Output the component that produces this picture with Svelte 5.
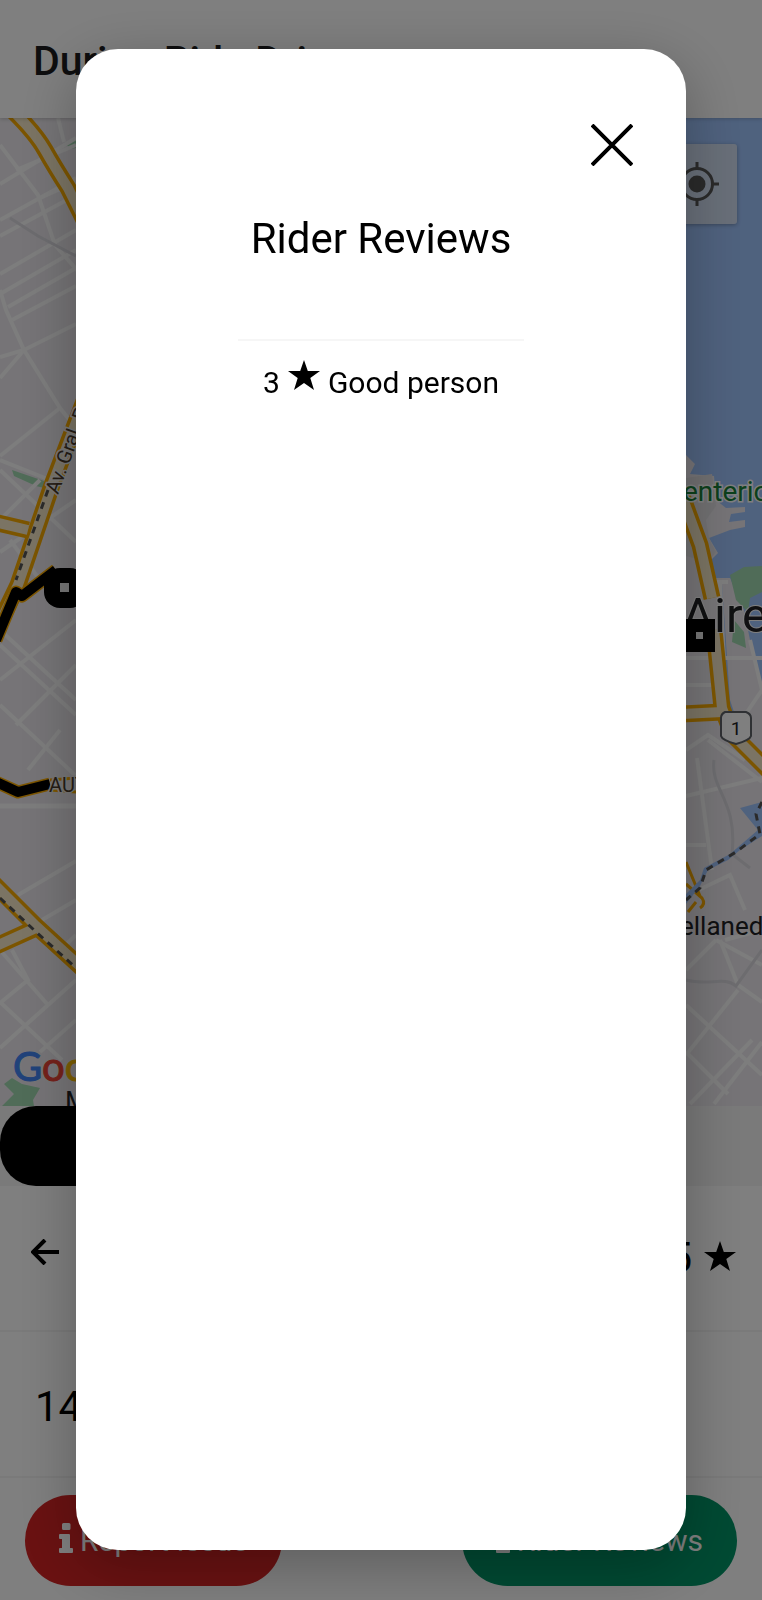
<script>
  let open = $state(true);
  const reviews = [{ stars: 3, comment: 'Good person' }];

  const minorRoads = [
    'M0 145 L38 195 L55 245 L90 285', 'M58 118 L64 142', 'M0 184 L76 138', 'M16 170 L76 145', 'M0 220 L76 178',
    'M0 236 L76 195', 'M40 198 L76 182', 'M0 274 L76 230', 'M0 294 L76 250', 'M8 307 L76 268',
    'M12 320 L76 286', 'M0 290 L6 310 L24 350 L60 408 L76 428', 'M0 357 L24 350 L76 324', 'M24 350 L0 378',
    'M60 408 L0 456', 'M0 460 L50 480 M0 520 L40 480', 'M0 470 L76 542', 'M0 552 L76 500',
    'M10 540 L40 580', 'M0 630 L76 700', 'M0 645 L76 715', 'M0 680 L76 620',
    'M0 705 L76 776', 'M16 725 L76 665', 'M28 770 L60 730',
    'M18 895 L76 861', 'M42 920 L76 900', 'M0 950 L48 1005', 'M12 950 L28 980 L0 1003', 'M0 1002 L62 1060',
    'M76 980 L0 1048', 'M40 1052 L76 1020', 'M56 954 L76 935',
    'M686 658 H712', 'M686 685 H712', 'M686 750 L708 735 L745 760', 'M697 758 L712 870', 'M686 796 L762 778',
    'M708 740 L762 782', 'M686 845 H706', 'M686 896 L730 875 L745 910',
    'M720 940 L738 985 L762 1002', 'M686 970 L716 940', 'M716 940 L762 965', 'M686 1005 L762 1075',
    'M738 990 L686 1055', 'M686 1052 L728 1094', 'M690 1104 L752 1040', 'M762 1042 L714 1104',
    'M725 940 L762 930', 'M750 640 L762 690', 'M712 658 H762', 'M720 582 L724 660',
    'M762 690 L728 740', 'M728 582 H714'
  ];
  const highways = [
    'M14 112 Q36 134 45 150 T68 188 L84 220',
    'M-6 947 L36 928', 'M-6 884 L36 926 L84 970',
    'M86 396 L52 485 L18 585 L-6 635', 'M-6 522 L28 530',
    'M682 496 L700 545 L712 598', 'M714 630 L722 708 L732 734 L768 770', 'M682 714 L722 712'
  ];
</script>

{#snippet star()}
  <svg class="star" viewBox="0 0 32 30" aria-hidden="true"><path d="M16 0 19.8 11H32l-9.7 7L26 30l-10-7-10 7 3.7-12L0 11h12.2z" /></svg>
{/snippet}

{#snippet info()}
  <svg class="info" viewBox="0 0 14 30" aria-hidden="true"><path d="M4.500 0H10a1.500 1.500 0 0 1 1.500 1.500v4A1.500 1.500 0 0 1 10 7H4.500A1.500 1.500 0 0 1 3 5.500v-4A1.500 1.500 0 0 1 4.500 0zM1 11h9a1 1 0 0 1 1 1v13h2a1 1 0 0 1 1 1v3a1 1 0 0 1-1 1H1a1 1 0 0 1-1-1v-3a1 1 0 0 1 1-1h2v-9H1a1 1 0 0 1-1-1v-3a1 1 0 0 1 1-1z" /></svg>
{/snippet}

<div class="page">
  <header><h1>During Ride Driver</h1></header>

  <section class="map" aria-label="Map">
    <svg class="tiles" viewBox="0 118 762 988" preserveAspectRatio="xMidYMid slice">
      <rect y="118" width="762" height="988" fill="#ece9ee" />
      <path class="water" d="M600 118H762V690L754 660 744 610 730 578H714L709 562 718 553 709 538 730 530 745 527V520L729 522 731 514 745 512V507L726 508 716 500 714 476 690 474 695 464 686 455 600 440z" />
      <path d="M686 478 712 474 716 506 706 520 709 538 716 552 708 562 686 556z" fill="#e2e0e3" />
      <path d="M716 578 730 578 748 640 762 694V800H734L728 660z" fill="#ece9ee" />
      <path class="water" d="M722 584 730 700 734 712 724 712 720 640z" />
      <path class="park" d="M730 575 744 567 762 566V592L750 598 748 612 736 600zM734 620 744 632 746 648 732 642zM66 144 76 138V148L70 149zM12 470 44 481V488L36 486 14 476zM12 1078 22 1084 40 1088 33 1100 34 1106H2L14 1094 4 1084z" />
      {#each minorRoads as d}<path class="minor" {d} />{/each}
      <path d="M10 218 38 236 76 256M714 760C710 790 738 800 732 854L750 868M686 980C710 986 724 976 736 986L762 950" fill="none" stroke="#dad9df" stroke-width="3" />
      <path d="M0 806H76" stroke="#fafafa" stroke-width="5" />
      {#each highways as d}<path class="casing" {d} />{/each}
      {#each highways as d}<path class="lane" {d} />{/each}
      <path class="rail" d="M48 490 16 580M0 898 34 930 76 968" />
      <path class="ramp" d="M686 862 700 896M686 884 702 898Q706 904 700 908M688 912 696 902" />
      <path class="water" d="M740 808 762 802V836L740 850 728 860 708 870 700 886 686 904 686 894 700 880 704 868 730 854 758 830z" />
      <path class="rail" d="M762 802 756 814 760 834 736 852 706 870 700 888 686 900" />
      <path d="M-4 640 16 592 22 596 56 570M-4 782 18 792 50 784" fill="none" stroke="#f9ab00" stroke-width="13" stroke-linejoin="round" />
      <path d="M-4 640 16 592 22 596 56 570M-4 782 18 792 50 784" fill="none" stroke="#000" stroke-width="10" stroke-linejoin="round" />
      <path d="M50 780 76 778M50 790 76 792" stroke="#f9ab00" stroke-width="3" />
      <rect x="44" y="568" width="42" height="40" rx="16" />
      <rect x="60" y="583" width="9" height="9" fill="#eee" />

      <text class="road-name" transform="translate(58 495) rotate(-70)">Av. Gral. Paz</text>
      <text class="road-name" x="49" y="792">AUTOP.</text>
      <text x="683" y="501" font-size="28" fill="#188038" stroke="#fff" stroke-width="3" paint-order="stroke">enterio</text>
      <text x="682" y="632" font-size="49" fill="#202124" stroke="#fff" stroke-width="2" paint-order="stroke">Aires</text>
      <rect x="682" y="619" width="33" height="33" />
      <rect x="696" y="632" width="7" height="7" fill="#eee" />
      <path d="M725 712H746Q751 714 751 718V736Q750 740 736 744 722 740 721 736V718Q721 714 725 712z" fill="#fff" stroke="#5f6368" stroke-width="2" />
      <text x="736" y="735" font-size="19" text-anchor="middle" fill="#202124">1</text>
      <text x="680" y="935" font-size="26" fill="#202124">ellaneda</text>
      <text x="65" y="1111" font-size="27" fill="#202124">M</text>
      <text class="logo" x="13" y="1081"><tspan fill="#4285f4" stroke="#4285f4">G</tspan><tspan fill="#ea4335" stroke="#ea4335">o</tspan><tspan fill="#fbbc05" stroke="#fbbc05">o</tspan><tspan fill="#4285f4">g</tspan><tspan fill="#34a853">l</tspan><tspan fill="#ea4335">e</tspan></text>
    </svg>
    <button class="locate" aria-label="My location">
      <svg viewBox="0 0 44 44"><g fill="none" stroke="#555" stroke-width="3"><circle cx="22" cy="22" r="15.500" /><path d="M22 0v7M22 37v7M0 22h7M37 22h7" /></g><circle cx="22" cy="22" r="8.500" fill="#555" /></svg>
    </button>
  </section>

  <div class="status"><button class="ride" aria-label="Ride status"></button></div>

  <div class="row rider">
    <button class="back" aria-label="Back"><svg viewBox="0 0 28 26"><path d="M28 13H3M14 1 2 13l12 12" fill="none" stroke="#000" stroke-width="4" /></svg></button>
    <span class="rating">5 {@render star()}</span>
  </div>
  <div class="row fare">14</div>

  <footer>
    <button class="action danger">{@render info()} Report Issue</button>
    <button class="action success" onclick={() => (open = true)}>{@render info()} Rider Reviews</button>
  </footer>
</div>

{#if open}
  <div class="backdrop">
    <div class="modal" role="dialog" aria-modal="true" aria-labelledby="reviews-title">
      <button class="close" aria-label="Close" onclick={() => (open = false)}>
        <svg viewBox="0 0 42 42"><path d="M1 1 41 41M41 1 1 41" stroke="#000" stroke-width="4" /></svg>
      </button>
      <h2 id="reviews-title">Rider Reviews</h2>
      <ul>
        {#each reviews as review}
          <li><span>{review.stars}</span>{@render star()}<span>{review.comment}</span></li>
        {/each}
      </ul>
    </div>
  </div>
{/if}

<style>
  :global(body) { margin: 0; font-family: Roboto, sans-serif; color: #000; background: #fff; }
  * { box-sizing: border-box; }
  button { margin: 0; padding: 0; border: 0; font: inherit; background: none; cursor: pointer; }
  svg { display: block; flex: none; }
  .page { display: flex; flex-direction: column; min-height: 100vh; }
  header { display: flex; align-items: center; height: 118px; padding: 4px 33px 0; box-shadow: 0 1px 4px rgba(0, 0, 0, .2); z-index: 1; }
  h1 { margin: 0; font-size: 41px; font-weight: 500; line-height: 50px; color: #1c1c1e; }
  .map { position: relative; flex: 1; min-height: 400px; overflow: hidden; }
  .tiles { position: absolute; inset: 0; width: 100%; height: 100%; }
  .water { fill: #9fc4fd; }
  .park { fill: #a0d8b0; }
  .minor { fill: none; stroke: #fafafa; stroke-width: 4; }
  .casing { fill: none; stroke: #f9ab00; stroke-width: 17; stroke-linejoin: round; }
  .lane { fill: none; stroke: #f6e9c8; stroke-width: 10; stroke-linejoin: round; }
  .ramp { fill: none; stroke: #f9ab00; stroke-width: 3; }
  .rail { fill: none; stroke: #555; stroke-width: 3; stroke-dasharray: 7 6; }
  .road-name { font-size: 20px; fill: #4a3a2a; stroke: #eee; stroke-width: 3px; paint-order: stroke; }
  .logo { font-family: Lato, sans-serif; font-size: 40px; stroke-width: 1px; }
  .locate { position: absolute; top: 26px; right: 25px; display: grid; place-items: center; width: 80px; height: 80px; border-radius: 3px; background: rgba(238, 238, 238, .65); box-shadow: 0 1px 4px rgba(0, 0, 0, .3); }
  .locate svg { width: 44px; }
  .status { background: #f4f4f4; }
  .ride { display: block; width: 50%; height: 80px; border-radius: 36px; background: #000; }
  .row { display: flex; align-items: center; height: 146px; border-bottom: 2px solid #f4f4f4; font-size: 42px; line-height: 50px; }
  .rider { justify-content: space-between; padding: 0 26px 0 31px; }
  .back { padding-bottom: 12px; }
  .back svg { width: 28px; }
  .rating { display: flex; align-items: center; gap: 12px; }
  .rating :global(.star) { margin-bottom: 4px; }
  .star { width: 32px; height: 30px; }
  .fare { padding: 5px 35px 0; }
  footer { display: flex; justify-content: space-between; padding: 17px 25px 14px; }
  .action { display: flex; align-items: center; gap: 7px; height: 91px; padding: 0 34px; border-radius: 46px; font-size: 30px; color: #fff; }
  .info { width: 14px; fill: #fff; margin-bottom: 5px; }
  .danger { background: #d42424; }
  .success { background: #009466; }
  .backdrop { position: fixed; inset: 0; padding: 49px 10% 50px; background: rgba(0, 0, 0, .5); z-index: 2; }
  .modal { display: flex; flex-direction: column; align-items: center; height: 100%; padding: 75px 53px; border-radius: 42px; background: #fff; box-shadow: 0 16px 60px rgba(0, 0, 0, .28); overflow: auto; }
  .close { align-self: flex-end; }
  .close svg { width: 42px; }
  h2 { margin: 48px 0 75px; font-size: 42px; font-weight: 400; line-height: 50px; }
  ul { margin: 0; padding: 0; list-style: none; }
  li { display: flex; padding: 19px 25px; border-top: 2px solid #f6f6f6; gap: 8px; font-size: 30px; line-height: 46px; }
</style>
